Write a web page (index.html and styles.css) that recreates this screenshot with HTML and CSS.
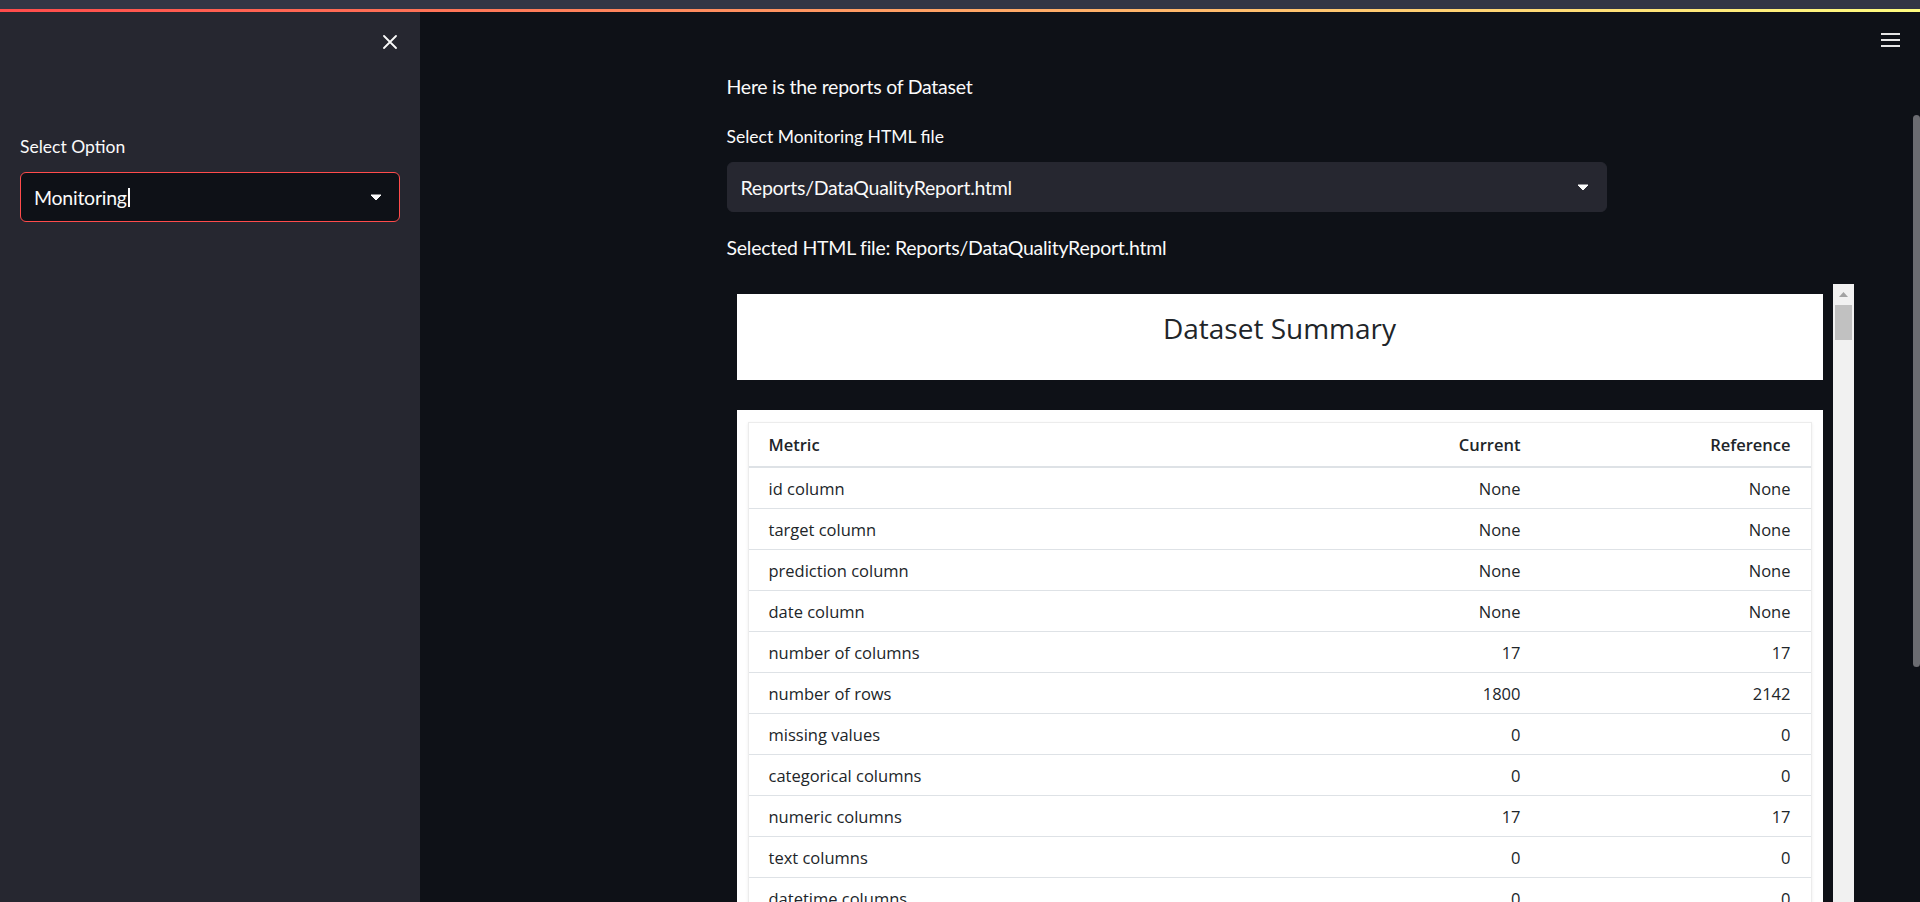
FILE: index.html
```html
<!DOCTYPE html>
<html lang="en">
<head>
<meta charset="utf-8">
<title>Monitoring</title>
<link rel="stylesheet" href="styles.css">
</head>
<body>
<div class="app">
  <div class="topbar"></div>
  <div class="decoration"></div>
  <div class="layout">
    <aside class="sidebar">
      <div class="sidebar-top">
        <button class="icon-btn close-btn" aria-label="Close sidebar">
          <svg width="14" height="14" viewBox="0 0 14 14"><path d="M1 1 L13 13 M13 1 L1 13" stroke="#fafafa" stroke-width="1.8" stroke-linecap="round" fill="none"/></svg>
        </button>
      </div>
      <div class="field side-field">
        <label class="label">Select Option</label>
        <div class="select select-side">
          <span class="select-value">Monitoring<span class="caret"></span></span>
          <svg class="arrow" width="12" height="7" viewBox="0 0 12 7"><path d="M1 1 L11 1 L6 6 Z" fill="#fafafa" stroke="#fafafa" stroke-width="1" stroke-linejoin="round"/></svg>
        </div>
      </div>
    </aside>
    <main class="main">
      <button class="icon-btn menu-btn" aria-label="Main menu">
        <svg width="19" height="14" viewBox="0 0 19 14"><path d="M0 1 H19 M0 7 H19 M0 13 H19" stroke="#e6e6e6" stroke-width="2" fill="none"/></svg>
      </button>
      <div class="main-inner">
        <div class="content">
          <p class="text">Here is the reports of Dataset</p>
          <div class="field">
            <label class="label">Select Monitoring HTML file</label>
            <div class="select select-main">
              <span class="select-value">Reports/DataQualityReport.html</span>
              <svg class="arrow" width="12" height="7" viewBox="0 0 12 7"><path d="M1 1 L11 1 L6 6 Z" fill="#fafafa" stroke="#fafafa" stroke-width="1" stroke-linejoin="round"/></svg>
            </div>
          </div>
          <p class="text">Selected HTML file: Reports/DataQualityReport.html</p>
          <div class="frame">
            <div class="frame-body">
              <div class="card title-card"><h1 class="title">Dataset Summary</h1></div>
              <div class="card table-holder">
                <div class="table-card">
                  <div class="row head"><div class="c metric">Metric</div><div class="c num">Current</div><div class="c num">Reference</div></div>
                  <div class="row"><div class="c metric">id column</div><div class="c num">None</div><div class="c num">None</div></div>
                  <div class="row"><div class="c metric">target column</div><div class="c num">None</div><div class="c num">None</div></div>
                  <div class="row"><div class="c metric">prediction column</div><div class="c num">None</div><div class="c num">None</div></div>
                  <div class="row"><div class="c metric">date column</div><div class="c num">None</div><div class="c num">None</div></div>
                  <div class="row"><div class="c metric">number of columns</div><div class="c num">17</div><div class="c num">17</div></div>
                  <div class="row"><div class="c metric">number of rows</div><div class="c num">1800</div><div class="c num">2142</div></div>
                  <div class="row"><div class="c metric">missing values</div><div class="c num">0</div><div class="c num">0</div></div>
                  <div class="row"><div class="c metric">categorical columns</div><div class="c num">0</div><div class="c num">0</div></div>
                  <div class="row"><div class="c metric">numeric columns</div><div class="c num">17</div><div class="c num">17</div></div>
                  <div class="row"><div class="c metric">text columns</div><div class="c num">0</div><div class="c num">0</div></div>
                  <div class="row"><div class="c metric">datetime columns</div><div class="c num">0</div><div class="c num">0</div></div>
                  <div class="row"><div class="c metric">empty columns</div><div class="c num">0</div><div class="c num">0</div></div>
                  <div class="row"><div class="c metric">constant columns</div><div class="c num">0</div><div class="c num">0</div></div>
                </div>
              </div>
            </div>
            <div class="vscroll">
              <div class="vscroll-up"><svg width="9" height="5" viewBox="0 0 9 5"><path d="M0 5 L4.5 0 L9 5 Z" fill="#a3a3a3"/></svg></div>
              <div class="vscroll-thumb"></div>
            </div>
          </div>
        </div>
      </div>
      <div class="main-scroll"><div class="main-thumb"></div></div>
    </main>
  </div>
</div>
</body>
</html>
```
FILE: styles.css
```css
html, body {
  margin: 0;
  height: 100%;
}
body {
  background: #0e1117;
  color: #fafafa;
  font-family: Lato, "Liberation Sans", sans-serif;
  overflow: hidden;
}
.app {
  height: 100vh;
  display: flex;
  flex-direction: column;
}
.topbar {
  height: 9px;
  background: #333645;
  flex-shrink: 0;
}
.decoration {
  height: 3px;
  background: linear-gradient(90deg, #ff4b4b, #fffd80);
  flex-shrink: 0;
}
.layout {
  flex: 1;
  display: flex;
  min-height: 0;
}
.icon-btn {
  border: 0;
  background: transparent;
  padding: 0;
  margin: 0;
  display: block;
  line-height: 0;
  cursor: pointer;
}

/* Sidebar */
.sidebar {
  width: 420px;
  flex-shrink: 0;
  background: #262730;
  box-sizing: border-box;
  padding: 23px 20px 0 20px;
}
.sidebar-top {
  display: flex;
  justify-content: flex-end;
  padding-right: 3px;
}
.close-btn svg { display: block; }
.side-field { margin-top: 84px; }

.label {
  display: block;
  font-size: 17.5px;
  line-height: 28px;
  color: #fafafa;
  margin-bottom: 11px;
}
.select {
  height: 50px;
  box-sizing: border-box;
  border-radius: 6px;
  display: flex;
  align-items: center;
  justify-content: space-between;
  padding: 0 17px 0 13px;
  font-size: 19.5px;
  letter-spacing: -0.25px;
  color: #fafafa;
}
.select-side {
  background: #0e1117;
  border: 1px solid #ff4b4b;
}
.select-main {
  background: #262730;
  border: 1px solid #262730;
}
.select-value {
  display: flex;
  align-items: center;
}
.caret {
  display: inline-block;
  width: 2px;
  height: 19px;
  background: #fafafa;
  margin-left: 1px;
}
.arrow { display: block; }

/* Main */
.main {
  flex: 1;
  display: flex;
  position: relative;
  min-width: 0;
}
.menu-btn {
  position: absolute;
  top: 21px;
  right: 20px;
  z-index: 2;
}
.main-inner {
  flex: 1;
  min-width: 0;
  overflow: hidden;
}
.content {
  width: 880px;
  margin: 0 auto;
  padding-top: 59px;
  display: flex;
  flex-direction: column;
  gap: 20px;
}
.text {
  margin: 0;
  font-size: 19.5px;
  letter-spacing: -0.25px;
  line-height: 32px;
}
.main-scroll {
  width: 7px;
  flex-shrink: 0;
}
.main-thumb {
  margin-top: 103px;
  height: 552px;
  background: #6b6c71;
  border-radius: 4px;
}

/* Embedded report frame */
.frame {
  width: 1127px;
  height: 760px;
  display: flex;
  flex-shrink: 0;
}
.frame-body {
  flex: 1;
  padding: 10px;
  display: flex;
  flex-direction: column;
  gap: 30px;
  font-family: "Open Sans", "Noto Sans", sans-serif;
  color: #212529;
}
.card { background: #ffffff; }
.title-card {
  height: 86px;
  box-sizing: border-box;
  padding-top: 16px;
  text-align: center;
}
.title {
  margin: 0;
  font-size: 28px;
  line-height: 36px;
  font-weight: 400;
  color: #212529;
}
.table-holder {
  padding: 12px 11px 0 11px;
  flex: 1;
}
.table-card {
  border: 1px solid #ececec;
  box-shadow: 0 1px 3px rgba(0, 0, 0, 0.08);
}
.row {
  display: grid;
  grid-template-columns: 1fr 270px 270px;
  height: 40px;
  border-bottom: 1px solid #dee2e6;
  font-size: 16.5px;
}
.row.head {
  height: 43px;
  border-bottom: 2px solid #dee2e6;
  font-weight: 600;
}
.c {
  display: flex;
  align-items: center;
  padding: 0 20px;
}
.metric { padding-left: 20px; }
.num { justify-content: flex-end; }

.vscroll {
  width: 21px;
  background: #f1f1f1;
  flex-shrink: 0;
}
.vscroll-up {
  height: 21px;
  display: flex;
  align-items: center;
  justify-content: center;
}
.vscroll-up svg { display: block; }
.vscroll-thumb {
  margin: 0 2px;
  height: 35px;
  background: #c1c1c1;
}
```
